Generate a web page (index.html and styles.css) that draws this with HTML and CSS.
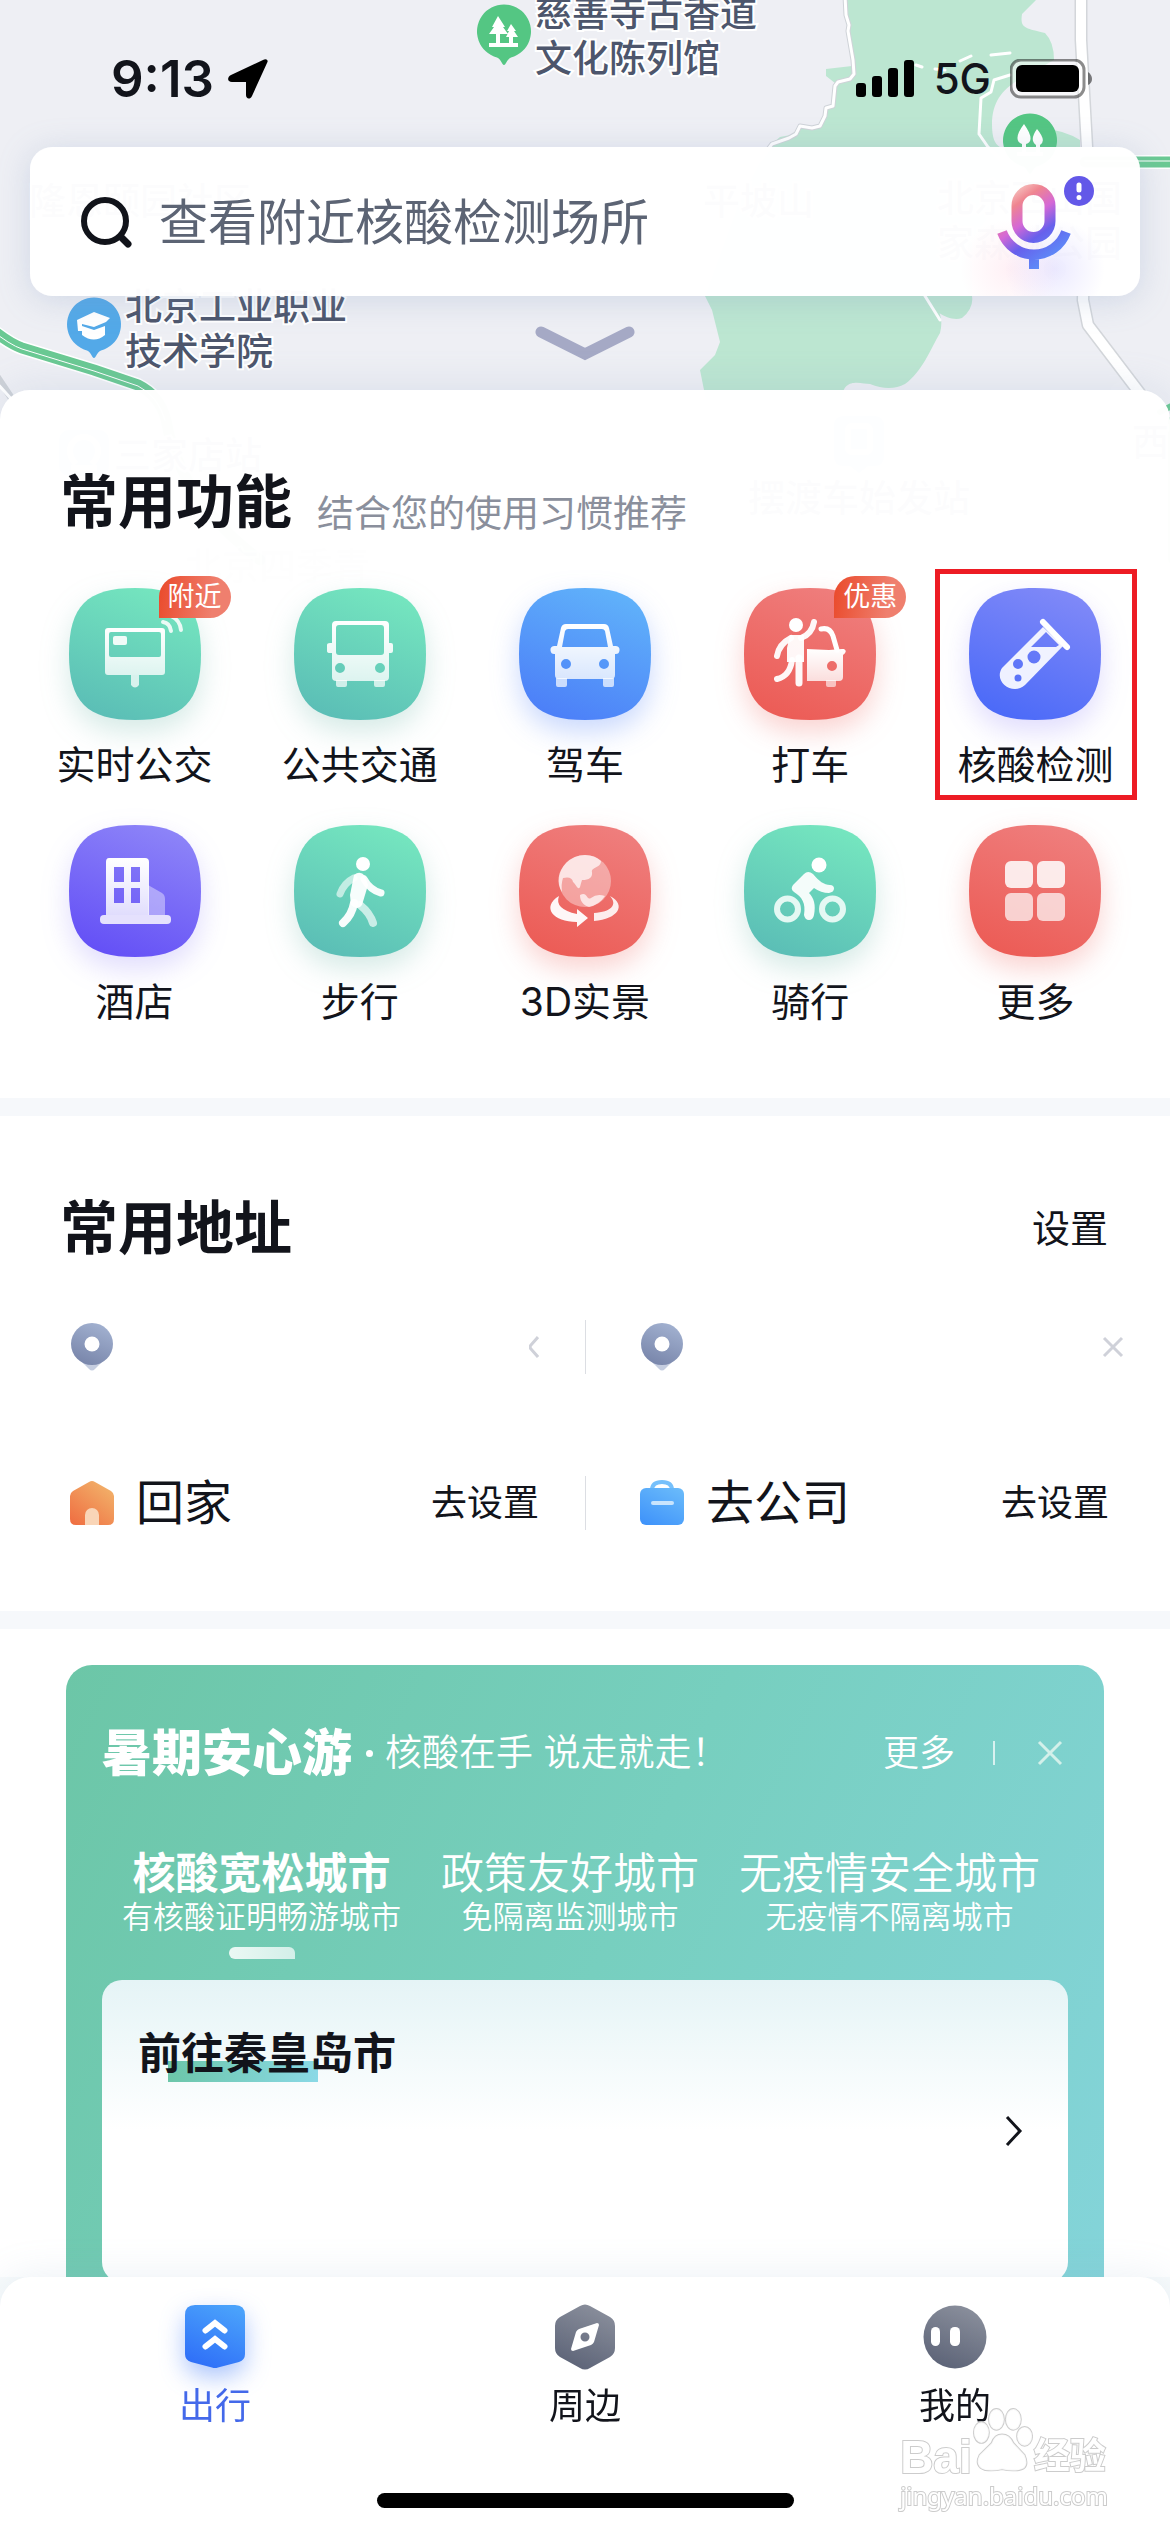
FILE: index.html
```html
<!DOCTYPE html>
<html lang="zh-CN">
<head>
<meta charset="utf-8">
<meta name="viewport" content="width=device-width, initial-scale=1">
<title>出行</title>
<link rel="stylesheet" href="styles.css">
</head>
<body>
<svg class="defs" aria-hidden="true">
  <defs>
    <linearGradient id="g-green" x1="0.3" y1="1" x2="0.7" y2="0"><stop offset="0" stop-color="#5bbeb6"/><stop offset="1" stop-color="#75e6bf"/></linearGradient>
    <linearGradient id="g-blue" x1="0.3" y1="1" x2="0.7" y2="0"><stop offset="0" stop-color="#4c7ff8"/><stop offset="1" stop-color="#60b2fa"/></linearGradient>
    <linearGradient id="g-red" x1="0.3" y1="1" x2="0.7" y2="0"><stop offset="0" stop-color="#ec5c56"/><stop offset="1" stop-color="#ef7e7d"/></linearGradient>
    <linearGradient id="g-indigo" x1="0.3" y1="1" x2="0.7" y2="0"><stop offset="0" stop-color="#4b6af8"/><stop offset="1" stop-color="#8089f8"/></linearGradient>
    <linearGradient id="g-purple" x1="0.3" y1="1" x2="0.7" y2="0"><stop offset="0" stop-color="#6450f6"/><stop offset="1" stop-color="#8d84f8"/></linearGradient>
    <linearGradient id="g-gray" x1="0.3" y1="1" x2="0.7" y2="0"><stop offset="0" stop-color="#5c6377"/><stop offset="1" stop-color="#8a8f9c"/></linearGradient>
    <linearGradient id="g-white" x1="0" y1="0" x2="0" y2="1"><stop offset="0" stop-color="#fff"/><stop offset="1" stop-color="#fff" stop-opacity=".78"/></linearGradient>
    <linearGradient id="g-pin" x1="0.3" y1="1" x2="0.7" y2="0"><stop offset="0" stop-color="#7885aa"/><stop offset="1" stop-color="#a2b1d0"/></linearGradient>
    <linearGradient id="g-home" x1="0" y1="1" x2="0.8" y2="0"><stop offset="0" stop-color="#ef6c40"/><stop offset="1" stop-color="#f2b26a"/></linearGradient>
    <linearGradient id="g-bag" x1="0.2" y1="1" x2="0.8" y2="0"><stop offset="0" stop-color="#4094fa"/><stop offset="1" stop-color="#68b9fa"/></linearGradient>
    <linearGradient id="g-trip" x1="0.3" y1="1" x2="0.7" y2="0"><stop offset="0" stop-color="#2f6ff8"/><stop offset="1" stop-color="#4aa2fb"/></linearGradient>
    <linearGradient id="g-mic" gradientUnits="userSpaceOnUse" x1="16" y1="14" x2="66" y2="84"><stop offset="0" stop-color="#f7c9c4"/><stop offset=".18" stop-color="#ef8590"/><stop offset=".4" stop-color="#d468d6"/><stop offset=".62" stop-color="#6760ec"/><stop offset="1" stop-color="#5b95fb"/></linearGradient>
    <path id="squircle" d="M66 0C114 0 132 18 132 66S114 132 66 132 0 114 0 66 18 0 66 0Z"/>
    <path id="map-pin" d="M-7 25.500C-3 27 -2 33 0 33S3 27 7 25.500A27 27 0 1 0-7 25.500Z"/>
  </defs>
</svg>

<div class="app">
  <main class="screen">
    <svg class="map" viewBox="0 0 1170 720" aria-hidden="true">
      <path fill="#bce6d1" d="M845 0 848 25 852 66 826 69V76L835 83 834 106 826 108 822 125 812 128 800 126 796 134 780 137 768 147 740 200 705 296 712 310 720 342 715 355 700 370 706 400H842C842 376 862 384 870 384Q890 392 905 384C922 372 930 350 940 333Q946 310 925 296C932 312 950 322 962 318Q974 308 972 296V240L1000 200V147Q992 143 992 125C992 100 1004 88 1022 78L1054 60Q1054 42 1045 33C1024 28 1020 28 1022 14L1036 0Z"/>
      <path fill="#bce6d1" d="M1040 128Q1064 130 1080 140V150H1040Z"/>
      <g fill="none" stroke-linecap="round" stroke-linejoin="round">
        <path stroke="#cfd3d8" stroke-width="5" d="M845-4 846 15 849 25 848 31 853 60 854 74 850 79 838 82 835 86 833 106 826 108 825 116 820 126 812 128 800 126 796 134 789 138 772 144 760 160"/>
        <g stroke="#fff" stroke-width="3">
          <path d="M845-4 846 15 849 25 848 31 853 60 854 74 850 79 838 82 835 86 833 106 826 108 825 116 820 126 812 128 800 126 796 134 789 138 772 144 760 160"/>
          <path d="M1010 75 994 80 991 92 981 98 979 134 988 147 1020 180"/>
          <path d="M960 61 971 56M991 55 1010 53M916 65 922 67M935 69 945 70M925 296 940 320"/>
        </g>
        <path stroke="#d3d6da" stroke-width="13" d="M1081-4V40L1087 147 1083 300 1088 325 1145 400"/>
        <path stroke="#fff" stroke-width="10" d="M1081-4V40L1087 147 1083 300 1088 325 1145 400"/>
        <path stroke="#fff" stroke-width="14" d="M1085 162H1180"/>
        <path stroke="#6ac993" stroke-width="11" d="M1085 162H1180"/>
        <path stroke="#fff" stroke-width="1" d="M1085 161H1180"/>
        <g>
          <path stroke="#fff" stroke-width="14" d="M-10 328Q10 344 22 348L94 370 138 385Q160 396 166 420 180 500 260 560"/>
          <path stroke="#6ac993" stroke-width="11" d="M-10 328Q10 344 22 348L94 370 138 385Q160 396 166 420 180 500 260 560"/>
          <path stroke="#fff" stroke-width="1" d="M-10 329Q10 345 22 349L94 371 138 386Q158 396 165 420"/>
        </g>
        <path stroke="#cdd1d7" stroke-width="7" d="M-6 372 14 402 60 460"/>
        <path stroke="#fff" stroke-width="3" d="M-4 382 14 402 60 460"/>
        <path stroke="#6ac993" stroke-width="6" d="M1160 412Q1176 404 1180 400M1171 420V560"/>
      </g>
      <g transform="translate(504 32)"><use href="#map-pin" fill="#54c683"/><path fill="#fff" d="M-6-16 1-5H-1L4 2H-4V11H14V15H-15V11H-8V2H-15L-10-5H-12ZM7-8 12-1H10L14 5H9V11H5V5H2L5-1H3Z"/></g>
      <g transform="translate(94 325)"><use href="#map-pin" fill="#53a9e8"/><path fill="#fff" d="M-17-5 0-13 16-7 12-3 0 2-12-1V6H-16ZM-12 1 0 5 11 1V10Q0 19-12 10Z"/></g>
      <g transform="translate(1030 141)"><use href="#map-pin" fill="#54c683"/><path fill="#fff" d="M-6-17Q6 0-4 3V11H6V4Q-1-1 7-12 17 0 10 4V11H13V15H-13V11H-8V3Q-18-1-6-17Z"/></g>
      <g class="map-labels">
        <text x="535" y="27">慈善寺古香道</text>
        <text x="535" y="72">文化陈列馆</text>
        <text x="125" y="320">北京工业职业</text>
        <text x="125" y="365">技术学院</text>
        <text x="29" y="215">隆恩颐园社区</text>
        <text x="703" y="215">平坡山</text>
        <text x="937" y="212">北京西山国</text>
        <text x="937" y="257">家森林公园</text>
        <text x="114" y="469">三家店站</text>
        <text x="748" y="512">摆渡车始发站</text>
        <text x="1132" y="456">西</text>
        <text x="185" y="580" opacity=".5">北京四季青</text>
      </g>
      <g fill="#7aa2f0"><rect x="59" y="430" width="50" height="46" rx="10"/><path d="M844 416H874Q884 416 884 426V456Q884 466 874 466H868L859 473 850 466H844Q834 466 834 456V426Q834 416 844 416Z"/></g>
      <g fill="none" stroke="#fff" stroke-width="6"><path d="M76 464Q70 458 70 451A14 14 0 0 1 98 451Q98 458 92 464M71 468H97"/><rect x="848" y="426" width="22" height="26" rx="4"/></g>
    </svg>

    <header class="top">
      <div class="status">
        <span class="time">9:13</span>
        <svg class="locate" viewBox="0 0 40 40"><path d="M39 4 24 37C22 41 18 40 18 36V23H4C-1 23-1 18 3 16L35 1C38-1 41 1 39 4Z"/></svg>
        <svg class="signal" viewBox="0 0 58 38"><rect y="23" width="10" height="14" rx="3"/><rect x="16" y="16" width="10" height="21" rx="3"/><rect x="32" y="8" width="10" height="29" rx="3"/><rect x="48" width="10" height="37" rx="3"/></svg>
        <span class="network">5G</span>
        <svg class="battery" viewBox="0 0 82 40"><rect x="1" y="1" width="73" height="37" rx="10" fill="#fff" fill-opacity=".5" stroke="#000" stroke-opacity=".45" stroke-width="3"/><rect x="6" y="6" width="63" height="27" rx="6"/><path d="M78 13Q82 16 82 20T78 26Z" fill-opacity=".5"/></svg>
      </div>
      <form class="search">
        <svg class="search-icon" viewBox="0 0 52 52"><circle cx="24" cy="24" r="21" fill="none" stroke="#11131a" stroke-width="6"/><path d="M40 40 47 47" stroke="#11131a" stroke-width="7" stroke-linecap="round"/></svg>
        <input class="search-input" type="text" aria-label="搜索" placeholder="查看附近核酸检测场所">
        <button class="mic" type="button" aria-label="语音搜索">
          <svg viewBox="0 0 98 98"><g fill="none" stroke="url(#g-mic)"><rect x="20" y="15.500" width="33" height="48" rx="16.500" stroke-width="11"/><path stroke-width="10" d="M5 58A34 34 0 0 0 69 58M37 85V95"/></g><circle cx="82" cy="17" r="15" fill="#6358e8"/><path stroke="#fff" stroke-width="5" stroke-linecap="round" d="M82 11V16M82 23.400V23.500"/></svg>
        </button>
      </form>
      <button class="handle" type="button" aria-label="收起">
        <svg viewBox="0 0 100 36"><path d="M6 7 50 29 94 7" fill="none" stroke="#a5a9c5" stroke-width="11" stroke-linecap="round"/></svg>
      </button>
    </header>

    <div class="sheet">
      <section class="block">
        <div class="block-head"><h2>常用功能</h2><p class="hint">结合您的使用习惯推荐</p></div>
        <div class="tiles">
          <a class="tile green" href="#"><span class="tile-icon"><svg viewBox="0 0 132 132"><use href="#squircle" fill="url(#g-green)"/><path fill="url(#g-white)" fill-rule="evenodd" d="M39 40H93Q96 40 96 43V84Q96 87 93 87H39Q36 87 36 84V43Q36 40 39 40ZM42 44Q40 44 40 46V67Q40 69 42 69H90Q92 69 92 67V46Q92 44 90 44Z"/><rect x="44" y="48" width="14" height="9" rx="2" fill="#fff" opacity=".9"/><path fill="#fff" opacity=".75" d="M62 87H70V97Q66 102 62 97Z"/><path d="M94 34Q101 35 102 43M102 28Q111 32 112 42" fill="none" stroke="#fff" stroke-width="4" stroke-linecap="round" opacity=".85"/></svg><em class="badge">附近</em></span>实时公交</a>
          <a class="tile green" href="#"><span class="tile-icon"><svg viewBox="0 0 132 132"><use href="#squircle" fill="url(#g-green)"/><path fill="#fff" opacity=".7" d="M42 92H53V97Q53 99 51 99H44Q42 99 42 97ZM80 92H91V97Q91 99 89 99H82Q80 99 80 97Z"/><path fill="url(#g-white)" fill-rule="evenodd" d="M42 33H91Q95 33 95 37V55H97Q99 55 99 57V63Q99 65 97 65H95V89Q95 93 91 93H42Q38 93 38 89V65H36Q33 65 33 63V57Q33 55 36 55H38V37Q38 33 42 33ZM45 37Q42 37 42 40V64Q42 67 45 67H87Q90 67 90 64V40Q90 37 87 37ZM46 75A5 5 0 1 0 46 85A5 5 0 1 0 46 75ZM86 75A5 5 0 1 0 86 85A5 5 0 1 0 86 75Z"/></svg></span>公共交通</a>
          <a class="tile blue" href="#"><span class="tile-icon"><svg viewBox="0 0 132 132"><use href="#squircle" fill="url(#g-blue)"/><path fill="#fff" opacity=".7" d="M37 90H48V97Q48 99 46 99H39Q37 99 37 97ZM84 90H95V97Q95 99 93 99H86Q84 99 84 97Z"/><path fill="url(#g-white)" fill-rule="evenodd" d="M47 36H85Q89 36 90 40L94 58H97A4 4 0 0 1 96 66V87Q96 91 92 91H40Q36 91 36 87V66A4 4 0 0 1 35 58H38L42 40Q43 36 47 36ZM49 41Q47 41 46 43L43 59H89L86 43Q85 41 83 41ZM47 71A5 5 0 1 0 47 81A5 5 0 1 0 47 71ZM85 71A5 5 0 1 0 85 81A5 5 0 1 0 85 71Z"/></svg></span>驾车</a>
          <a class="tile red" href="#"><span class="tile-icon"><svg viewBox="0 0 132 132"><use href="#squircle" fill="url(#g-red)"/><circle cx="52" cy="37" r="7" fill="#fff"/><g fill="none" stroke="#fff" stroke-linecap="round" stroke-linejoin="round" opacity=".95"><path stroke-width="6" d="M70 34Q68 46 57 50M33 68Q35 56 47 50M48 72Q46 88 33 91"/><path stroke-width="7" d="M55 70V95"/></g><path fill="#fff" opacity=".95" d="M46 47H60V74H43V60Z"/><path fill="none" stroke="#fff" stroke-width="5" stroke-linecap="round" d="M77 41Q86 39 89 48L93 62"/><path fill="#fff" opacity=".6" d="M82 92H92V97Q92 99 90 99H84Q82 99 82 97Z"/><path fill="url(#g-white)" fill-rule="evenodd" d="M63 61 85 62 98 61H100Q104 63 99 67V89Q99 93 95 93H63ZM88 73A5 5 0 1 0 88 83A5 5 0 1 0 88 73Z"/></svg><em class="badge">优惠</em></span>打车</a>
          <a class="tile indigo marked" href="#"><span class="tile-icon"><svg viewBox="0 0 132 132"><use href="#squircle" fill="url(#g-indigo)"/><path stroke="#fff" stroke-width="6" stroke-linecap="round" d="M74 34 98 59"/><path fill="#fff" fill-rule="evenodd" opacity=".9" d="M74 39 94 58 56 97C44 108 24 94 33 80ZM77 44 62 59H87L90 57ZM65 62.500A6.500 6.500 0 1 0 65 75.500A6.500 6.500 0 1 0 65 62.500ZM49 71A5 5 0 1 0 49 81A5 5 0 1 0 49 71ZM49 86.500A3.500 3.500 0 1 0 49 93.500A3.500 3.500 0 1 0 49 86.500Z"/></svg></span>核酸检测</a>
          <a class="tile purple" href="#"><span class="tile-icon"><svg viewBox="0 0 132 132"><use href="#squircle" fill="url(#g-purple)"/><path fill="#fff" opacity=".4" d="M79 60 93 68Q96 70 96 74V91H79Z"/><path fill="url(#g-white)" fill-rule="evenodd" d="M40 33H76Q80 33 80 37V91H37V37Q37 33 40 33ZM45 42V57H55V42ZM62 42V57H71V42ZM45 63V78H55V63ZM62 63V78H71V63Z"/><rect x="31" y="90" width="71" height="9" rx="4" fill="#e5e1fd"/></svg></span>酒店</a>
          <a class="tile green" href="#"><span class="tile-icon"><svg viewBox="0 0 132 132"><use href="#squircle" fill="url(#g-green)"/><circle cx="69" cy="39" r="7" fill="#fff"/><g fill="none" stroke="#fff" stroke-linecap="round" stroke-linejoin="round"><path stroke-width="7" opacity=".6" d="M60 53Q50 58 46 69"/><path stroke-width="8" opacity=".65" d="M66 80Q76 88 79 98"/><path stroke-width="7" opacity=".95" d="M70 54Q76 65 87 68"/><path stroke-width="8" opacity=".95" d="M60 78Q58 90 49 98"/></g><path fill="#fff" opacity=".95" d="M60 50Q66 45 71 51L74 60 68 80Q64 86 57 80L56 70Z"/></svg></span>步行</a>
          <a class="tile red" href="#"><span class="tile-icon"><svg viewBox="0 0 132 132"><use href="#squircle" fill="url(#g-red)"/><circle cx="66" cy="56" r="26" fill="#fff" opacity=".38"/><path fill="#fff" opacity=".7" d="M66 30Q76 30 82 36C82 43 72 42 73 47Q74 55 63 55 62 58 61 62C59 66 57 59 54 57Q53 51 44 53 42 59 43 67C37 58 39 46 47 38Q55 30 66 30ZM61 70C69 66 67 76 72 73Q78 68 86 71 80 80 70 82C64 80 61 76 61 70Z"/><path fill="#fff" opacity=".95" d="M40 71Q35 84 58 89V84L69 93 58 102V97C34 97 22 82 40 71Z"/><path fill="#fff" opacity=".88" d="M91 71C108 80 99 94 75 96V88C92 87 99 80 91 71Z"/></svg></span>3D实景</a>
          <a class="tile green" href="#"><span class="tile-icon"><svg viewBox="0 0 132 132"><use href="#squircle" fill="url(#g-green)"/><circle cx="75" cy="40" r="7.500" fill="#fff"/><path fill="#fff" opacity=".93" d="M60 49 49 60Q46 64 50 67C58 72 62 78 60 90Q61 95 65 95T70 90C72 80 70 73 65 68L70 63Q77 68 85 68 90 67 90 63.500 90 60 86 60C80 60 75 56 69 49Q64 45 60 49Z"/><g fill="none" stroke="#e4f8f3" stroke-width="6"><circle cx="43.500" cy="84" r="10.500"/><circle cx="88.500" cy="84" r="10.500"/></g></svg></span>骑行</a>
          <a class="tile red" href="#"><span class="tile-icon"><svg viewBox="0 0 132 132"><use href="#squircle" fill="url(#g-red)"/><g fill="#fff"><g opacity=".86"><rect x="36" y="36" width="28" height="27" rx="6"/><rect x="68" y="36" width="28" height="27" rx="6"/></g><g opacity=".7"><rect x="36" y="68" width="28" height="28" rx="6"/><rect x="68" y="68" width="28" height="28" rx="6"/></g></g></svg></span>更多</a>
        </div>
      </section>

      <section class="block">
        <div class="block-head spread"><h2>常用地址</h2><a class="link" href="#">设置</a></div>
        <div class="places">
          <div class="place">
            <svg class="place-icon" viewBox="0 0 44 50"><path fill="#c5cde0" d="M10 38 19 47Q22 50 25 47L34 38Z"/><circle cx="22" cy="22" r="21" fill="url(#g-pin)"/><circle cx="22" cy="22" r="7.500" fill="#fff"/></svg>
            <button class="remove" type="button" aria-label="删除"><svg class="cut" viewBox="0 0 10 22"><path d="M9 1 2 9Q0 11 2 13L9 21"/></svg></button>
          </div>
          <div class="place">
            <svg class="place-icon" viewBox="0 0 44 50"><path fill="#c5cde0" d="M10 38 19 47Q22 50 25 47L34 38Z"/><circle cx="22" cy="22" r="21" fill="url(#g-pin)"/><circle cx="22" cy="22" r="7.500" fill="#fff"/></svg>
            <button class="remove outset" type="button" aria-label="删除"><svg viewBox="0 0 22 22"><path d="M2 2 20 20M20 2 2 20"/></svg></button>
          </div>
          <div class="place">
            <svg class="place-icon" viewBox="0 0 44 50"><path fill="url(#g-home)" d="M19 4Q22 2 25 4L41 13Q44 15 44 18V41Q44 47 38 47H6Q0 47 0 41V18Q0 15 3 13Z"/><path fill="#f9d5b7" d="M15 47V37A7 7 0 0 1 29 37V47Z"/></svg>
            <span class="place-name">回家</span><a class="place-set" href="#">去设置</a>
          </div>
          <div class="place">
            <svg class="place-icon" viewBox="0 0 44 50"><path d="M12 12Q12 4 22 4T32 12" fill="none" stroke="#76c0fb" stroke-width="4"/><rect y="10" width="44" height="37" rx="6" fill="url(#g-bag)"/><path d="M13 25H32" stroke="#c8e4fd" stroke-width="4" stroke-linecap="round"/></svg>
            <span class="place-name">去公司</span><a class="place-set" href="#">去设置</a>
          </div>
        </div>
      </section>

      <section class="block promo-block">
        <div class="promo">
          <div class="promo-head">
            <h2 class="promo-title">暑期安心游</h2><span class="dot"></span><p class="promo-sub">核酸在手 说走就走！</p>
            <a class="promo-more" href="#">更多</a><span class="bar"></span>
            <button class="close" type="button" aria-label="关闭"><svg viewBox="0 0 26 26"><path d="M2 2 24 24M24 2 2 24"/></svg></button>
          </div>
          <div class="tabs">
            <button class="tab active" type="button"><b>核酸宽松城市</b><small>有核酸证明畅游城市</small></button>
            <button class="tab" type="button"><b>政策友好城市</b><small>免隔离监测城市</small></button>
            <button class="tab" type="button"><b>无疫情安全城市</b><small>无疫情不隔离城市</small></button>
          </div>
          <a class="city" href="#">
            <h3>前往秦皇岛市</h3>
            <svg class="chevron" viewBox="0 0 18 32"><path d="M2 2 15 16 2 30"/></svg>
          </a>
        </div>
      </section>
    </div>
  </main>

  <nav class="nav">
    <div class="nav-items">
      <a class="nav-item current" href="#"><svg viewBox="0 0 66 66"><path fill="url(#g-trip)" d="M13 1H53Q63 1 63 11V50Q63 56 57 58L36 63.500Q33 64.500 30 63.500L9 58Q3 56 3 50V11Q3 1 13 1Z"/><path d="M23.500 26.500 33 19 42.500 26.500M23.500 42.500 33 35 42.500 42.500" fill="none" stroke="#fff" stroke-width="6" stroke-linejoin="miter" stroke-linecap="round"/></svg>出行</a>
      <a class="nav-item" href="#"><svg viewBox="0 0 66 66"><path fill="url(#g-gray)" d="M28 2Q33-1 38 2L58 13Q63 16 63 22V44Q63 50 58 53L38 64Q33 67 28 64L8 53Q3 50 3 44V22Q3 16 8 13Z"/><path fill="#fff" fill-rule="evenodd" d="M45 19Q47 19 47 21L42 38Q41 40 39 41L21 47Q19 47 19 45L24 28Q25 26 27 25ZM33 28.500A4.500 4.500 0 1 0 33 37.500A4.500 4.500 0 1 0 33 28.500Z"/></svg>周边</a>
      <a class="nav-item" href="#"><svg viewBox="0 0 66 66"><circle cx="33" cy="33" r="31.500" fill="url(#g-gray)"/><rect x="9" y="23" width="9" height="19" rx="4.500" fill="#fff"/><rect x="28" y="23" width="10" height="19" rx="4.500" fill="#fff"/></svg>我的</a>
    </div>
    <div class="home-bar"></div>
    <div class="watermark">
      <div class="wm-top"><span>Bai</span><svg viewBox="0 0 66 70"><g fill="#fff" fill-opacity=".85" stroke="#ccc" stroke-width="2"><ellipse cx="10" cy="26" rx="8" ry="11"/><ellipse cx="26" cy="12" rx="8" ry="11"/><ellipse cx="44" cy="12" rx="8" ry="11"/><ellipse cx="56" cy="30" rx="8" ry="10"/><path d="M32 28Q40 28 44 37L56 50Q62 64 50 66 40 67 32 65 24 67 14 66 2 62 8 50L21 37Q24 28 32 28Z"/></g><text x="17" y="60">du</text></svg><span class="wm-cn">经验</span></div>
      <div class="wm-url">jingyan.baidu.com</div>
    </div>
  </nav>
</div>
</body>
</html>
```
FILE: styles.css
```css
* { box-sizing: border-box; }

body {
  margin: 0;
  background: #f8fbfc;
  color: #12141b;
  font-family: Inter, "Noto Sans CJK SC", sans-serif;
}

h2, h3, p { margin: 0; }
a { color: inherit; text-decoration: none; }
svg { display: block; }
button { margin: 0; padding: 0; border: 0; background: none; color: inherit; font: inherit; cursor: pointer; }

.defs { position: absolute; width: 0; height: 0; }

.app { display: flex; flex-direction: column; height: 100vh; }

.screen {
  position: relative;
  flex: 1;
  min-height: 0;
  overflow-y: auto;
  scrollbar-width: none;
  background: #eeeff4;
}

/* Map behind the header and the top of the sheet */
.map { position: absolute; top: 0; left: 0; width: 100%; }
.map-labels {
  font-size: 37px;
  font-weight: 500;
  fill: #4d566c;
  stroke: #fff;
  stroke-width: 4px;
  paint-order: stroke;
}

.top { position: relative; }

.status { display: flex; align-items: center; height: 147px; padding: 10px 78px 0 111px; }
.time { font-size: 51px; font-weight: 600; line-height: 60px; }
.locate { width: 40px; height: 40px; margin-left: 14px; }
.signal { width: 58px; height: 38px; margin-left: auto; }
.network { margin: 0 19px 0 20px; font-size: 42px; font-weight: 500; line-height: 60px; }
.battery { width: 82px; height: 40px; }

.search {
  display: flex;
  align-items: center;
  height: 149px;
  margin: 0 30px;
  padding: 2px 45px 0 51px;
  border-radius: 22px;
  background:
    radial-gradient(circle 50px at calc(100% - 85px) 122px, rgba(130, 120, 255, .16), transparent),
    radial-gradient(circle 50px at calc(100% - 130px) 122px, rgba(250, 130, 170, .12), transparent),
    rgba(255, 255, 255, .985);
  box-shadow: 0 4px 32px rgba(130, 155, 195, .28);
}
.search-icon { width: 52px; height: 52px; }
.search-input {
  flex: 1;
  min-width: 0;
  height: 72px;
  margin-left: 26px;
  padding: 0;
  border: 0;
  outline: 0;
  background: none;
  color: #12141b;
  font: inherit;
  font-size: 49px;
}
.search-input::placeholder { color: #5c6474; opacity: 1; }
.mic svg { width: 98px; height: 98px; }

.handle { display: block; width: 100px; height: 94px; margin: 0 auto; }
.handle svg { width: 100px; height: 36px; }

/* Sheet */
.sheet {
  position: relative;
  border-radius: 30px 30px 0 0;
  background: rgba(255, 255, 255, .983);
  box-shadow: 0 0 40px rgba(130, 155, 195, .2);
}

.block { padding: 76px 0 72px; }
.block + .block { border-top: 18px solid #f6f8fb; }

.block-head { display: flex; align-items: flex-end; gap: 25px; padding: 0 62px 0 60px; }
.block-head h2 { font-size: 58px; font-weight: 700; line-height: 72px; }
.hint { color: #8a8f9c; font-size: 37px; line-height: 48px; }
.spread { align-items: center; justify-content: space-between; }
.link { font-size: 38px; line-height: 48px; }

.tiles { display: grid; grid-template-columns: repeat(5, 1fr); row-gap: 36px; margin-top: 50px; padding: 0 22px; }
.tile {
  position: relative;
  display: flex;
  flex-direction: column;
  align-items: center;
  gap: 21px;
  font-size: 39px;
  line-height: 48px;
}
.tile-icon { position: relative; width: 132px; height: 132px; }
.tile-icon svg { width: 132px; height: 132px; filter: drop-shadow(0 12px 14px var(--glow)); }
.green { --glow: rgba(91, 175, 160, .26); }
.blue { --glow: rgba(76, 127, 248, .3); }
.red { --glow: rgba(236, 92, 86, .28); }
.indigo, .purple { --glow: rgba(100, 80, 246, .2); }

.badge {
  position: absolute;
  top: -12px;
  left: 90px;
  width: 72px;
  height: 42px;
  border-radius: 21px 21px 21px 0;
  background: linear-gradient(100deg, #ea492a, #ef7f6e 75%);
  color: #fff;
  font-size: 27px;
  font-style: normal;
  line-height: 42px;
  text-align: center;
}

.marked::after {
  content: "";
  position: absolute;
  inset: -19px 11px -11px 12px;
  border: 5px solid #ed1c24;
}

/* Saved places */
.places {
  display: grid;
  grid-template-columns: 1fr 1fr;
  row-gap: 102px;
  margin-top: 56px;
  padding-bottom: 9px;
}
.place { display: flex; align-items: center; height: 54px; padding: 0 46px 0 70px; }
.place:nth-child(even) { padding: 0 61px 0 54px; border-left: 1px solid #dcdee3; }
.place-icon { width: 44px; height: 50px; }
.place-name { margin-left: 22px; font-size: 48px; line-height: 54px; }
.place-set { margin-left: auto; font-size: 36px; line-height: 48px; }
.remove { margin-left: auto; }
.outset { margin-right: -15px; }
.remove svg { width: 22px; height: 22px; fill: none; stroke: #cfd1d9; stroke-width: 3px; }
.remove .cut { width: 10px; }

/* Promotion card */
.promo-block.block { padding: 36px 66px 0; }
.promo {
  padding: 58px 36px 36px;
  border-radius: 26px 26px 0 0;
  background: linear-gradient(115deg, #6cc6a7, #77cfbf 50%, #84d4da);
  color: #fff;
}
.promo-head { display: flex; align-items: center; height: 60px; padding-right: 5px; }
.promo-title { font-size: 50px; font-weight: 900; line-height: 60px; }
.dot { width: 7px; height: 7px; margin: 0 12px 0 14px; border-radius: 50%; background: #fff; }
.promo-sub { font-size: 37px; font-weight: 350; line-height: 48px; }
.promo-more { margin-left: auto; font-size: 36px; font-weight: 350; line-height: 48px; }
.bar { width: 2px; height: 24px; margin: 0 42px 0 38px; background: rgba(255, 255, 255, .7); }
.close svg { width: 26px; height: 26px; fill: none; stroke: #d3f0ea; stroke-width: 3px; }

.tabs { display: flex; gap: 40px; margin-top: 66px; padding-left: 20px; }
.tab { position: relative; display: flex; flex-direction: column; align-items: center; gap: 2px; padding-bottom: 45px; }
.tab b { font-size: 43px; font-weight: 350; line-height: 48px; }
.tab small { font-size: 31px; font-weight: 350; line-height: 36px; }
.tab.active b { font-weight: 700; }
.tab.active::after {
  content: "";
  position: absolute;
  bottom: 21px;
  left: calc(50% - 33px);
  width: 66px;
  height: 12px;
  border-radius: 8px 8px 0 8px;
  background: linear-gradient(90deg, #ebf8f4, #d3efe8);
}

.city {
  display: flex;
  flex-wrap: wrap;
  align-items: flex-start;
  justify-content: space-between;
  height: 302px;
  padding: 45px 45px 0 36px;
  border-radius: 20px;
  background: linear-gradient(#e5f4f6, #fff 150px);
  color: #12141b;
}
.city h3 {
  background: linear-gradient(90deg, #6cc6a9, #8ad9e6) 30px 36px / 150px 21px no-repeat;
  font-size: 43px;
  font-weight: 700;
  line-height: 57px;
}
.chevron { width: 18px; height: 32px; margin-top: 90px; fill: none; stroke: #12141b; stroke-width: 3px; }

/* Bottom navigation */
.nav {
  position: relative;
  padding: 27px 0 24px;
  border-radius: 30px 30px 0 0;
  background: #fff;
  box-shadow: 0 0 40px rgba(130, 160, 190, .16);
}
.nav-items { display: grid; grid-template-columns: repeat(3, 1fr); padding: 0 30px; }
.nav-item { display: flex; flex-direction: column; align-items: center; gap: 14px; font-size: 36px; line-height: 44px; }
.nav-item svg { width: 66px; height: 66px; }
.current { color: #4469ea; }
.current svg { filter: drop-shadow(0 10px 12px rgba(47, 111, 248, .4)); }
.home-bar { width: 417px; height: 15px; margin: 65px auto 0; border-radius: 8px; background: #000; }

.watermark {
  position: absolute;
  right: 62px;
  bottom: 20px;
  color: #fff;
  -webkit-text-stroke: 2px #ccc;
  paint-order: stroke;
}
.wm-top { display: flex; align-items: flex-end; font-family: "Liberation Sans", "Noto Sans CJK SC", sans-serif; font-size: 46px; font-weight: 700; line-height: 46px; }
.wm-top svg { width: 62px; height: 66px; margin-bottom: 6px; }
.wm-top text { fill: #fff; font-size: 27px; font-weight: 400; }
.wm-cn { font-size: 36px; }
.wm-url { font-family: "Noto Sans", sans-serif; font-size: 24px; line-height: 32px; }
```
